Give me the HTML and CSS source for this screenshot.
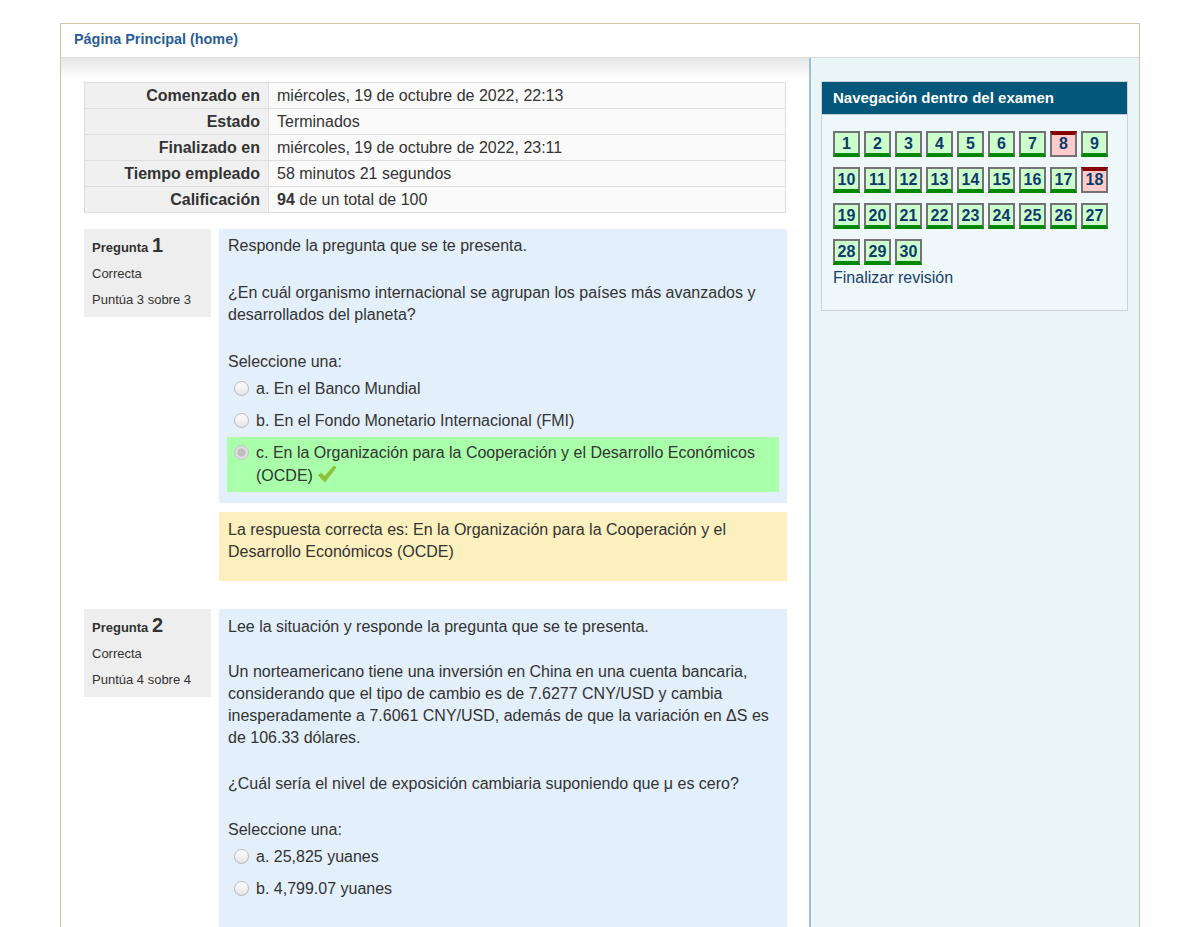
FILE: index.html
```html
<!DOCTYPE html>
<html lang="es">
<head>
<meta charset="utf-8">
<title>Revisión del examen</title>
<link rel="stylesheet" href="styles.css">
</head>
<body>
<div class="page">
  <header class="page-header">
    <a class="home-link" href="#">Página Principal (home)</a>
  </header>
  <div class="page-body">
    <main class="main">
      <table class="summary">
        <tr><th>Comenzado en</th><td>miércoles, 19 de octubre de 2022, 22:13</td></tr>
        <tr><th>Estado</th><td>Terminados</td></tr>
        <tr><th>Finalizado en</th><td>miércoles, 19 de octubre de 2022, 23:11</td></tr>
        <tr><th>Tiempo empleado</th><td>58 minutos 21 segundos</td></tr>
        <tr><th>Calificación</th><td><b>94</b> de un total de 100</td></tr>
      </table>

      <section class="que">
        <div class="info">
          <h3 class="qno">Pregunta <span class="num">1</span></h3>
          <div class="state">Correcta</div>
          <div class="grade">Puntúa 3 sobre 3</div>
        </div>
        <div class="content">
          <div class="formulation">
            <p class="gap-l">Responde la pregunta que se te presenta.</p>
            <p class="gap-l">¿En cuál organismo internacional se agrupan los países más avanzados y desarrollados del planeta?</p>
            <p class="prompt">Seleccione una:</p>
            <div class="answer">
              <div class="opt"><span class="radio"></span><span class="label">a. En el Banco Mundial</span></div>
              <div class="opt"><span class="radio"></span><span class="label">b. En el Fondo Monetario Internacional (FMI)</span></div>
              <div class="opt correct"><span class="radio checked"></span><span class="label">c. En la Organización para la Cooperación y el Desarrollo Económicos (OCDE) <svg class="tick" width="20" height="20" viewBox="0 0 20 20"><path d="M1 11.5 L4 8.5 L7.5 12 L17 1.5 L19.5 3.5 L8 18.5 Z" fill="#8fc23a"/></svg></span></div>
            </div>
          </div>
          <div class="outcome">
            <p>La respuesta correcta es: En la Organización para la Cooperación y el Desarrollo Económicos (OCDE)</p>
          </div>
        </div>
      </section>

      <section class="que">
        <div class="info">
          <h3 class="qno">Pregunta <span class="num">2</span></h3>
          <div class="state">Correcta</div>
          <div class="grade">Puntúa 4 sobre 4</div>
        </div>
        <div class="content">
          <div class="formulation formulation-long">
            <p class="gap-s">Lee la situación y responde la pregunta que se te presenta.</p>
            <p>Un norteamericano tiene una inversión en China en una cuenta bancaria, considerando que el tipo de cambio es de 7.6277 CNY/USD y cambia inesperadamente a 7.6061 CNY/USD, además de que la variación en ΔS es de 106.33 dólares.</p>
            <p>¿Cuál sería el nivel de exposición cambiaria suponiendo que μ es cero?</p>
            <p class="prompt">Seleccione una:</p>
            <div class="answer">
              <div class="opt"><span class="radio"></span><span class="label">a. 25,825 yuanes</span></div>
              <div class="opt"><span class="radio"></span><span class="label">b. 4,799.07 yuanes</span></div>
            </div>
          </div>
        </div>
      </section>
    </main>

    <aside class="side">
      <div class="nav-block">
        <div class="nav-header">Navegación dentro del examen</div>
        <div class="nav-body">
          <div class="qn-grid">
            <a class="qn ok" href="#">1</a><a class="qn ok" href="#">2</a><a class="qn ok" href="#">3</a><a class="qn ok" href="#">4</a><a class="qn ok" href="#">5</a><a class="qn ok" href="#">6</a><a class="qn ok" href="#">7</a><a class="qn bad" href="#">8</a><a class="qn ok" href="#">9</a>
            <a class="qn ok" href="#">10</a><a class="qn ok" href="#">11</a><a class="qn ok" href="#">12</a><a class="qn ok" href="#">13</a><a class="qn ok" href="#">14</a><a class="qn ok" href="#">15</a><a class="qn ok" href="#">16</a><a class="qn ok" href="#">17</a><a class="qn bad" href="#">18</a>
            <a class="qn ok" href="#">19</a><a class="qn ok" href="#">20</a><a class="qn ok" href="#">21</a><a class="qn ok" href="#">22</a><a class="qn ok" href="#">23</a><a class="qn ok" href="#">24</a><a class="qn ok" href="#">25</a><a class="qn ok" href="#">26</a><a class="qn ok" href="#">27</a>
            <a class="qn ok" href="#">28</a><a class="qn ok" href="#">29</a><a class="qn ok" href="#">30</a>
          </div>
          <a class="finish" href="#">Finalizar revisión</a>
        </div>
      </div>
    </aside>
  </div>
</div>
</body>
</html>
```
FILE: styles.css
```css
html, body {
  margin: 0;
  padding: 0;
  height: 100%;
  overflow: hidden;
  background: #fff;
}
body {
  font-family: "Liberation Sans", Arial, sans-serif;
  font-size: 16px;
  color: #333;
}
.page {
  width: 1080px;
  box-sizing: border-box;
  margin: 23px auto 0;
  border: 1px solid #ccc7ab;
  border-bottom: none;
  min-height: 1000px;
  display: flex;
  flex-direction: column;
}
.page-header {
  height: 34px;
  box-sizing: border-box;
  border-bottom: 1px solid #dcdcdc;
  display: flex;
  align-items: center;
  padding: 0 0 3px 13px;
}
.home-link {
  font-size: 14.4px;
  font-weight: bold;
  color: #2a5d98;
  text-decoration: none;
}
.page-body {
  flex: 1;
  display: flex;
}
.main {
  width: 748px;
  flex: none;
  box-sizing: border-box;
  padding: 24px 22px 0 23px;
  background: linear-gradient(#e6e6e6, #ffffff 20px);
}
.summary {
  width: 702px;
  border-collapse: collapse;
  margin-bottom: 16px;
}
.summary th, .summary td {
  border: 1px solid #dedede;
  height: 25px;
  padding: 0 8px;
  line-height: 22px;
  font-size: 16px;
}
.summary th {
  width: 167px;
  text-align: right;
  background: #f0f0f0;
  font-weight: bold;
  color: #333;
}
.summary td {
  background: #fafafa;
  text-align: left;
}
.que {
  display: flex;
  gap: 8px;
  margin-bottom: 28px;
}
.info {
  width: 127px;
  height: 88px;
  flex: none;
  box-sizing: border-box;
  background: #eee;
  padding: 8px 8px 0;
  font-size: 13px;
}
.qno {
  margin: 0;
  font-size: 13px;
  font-weight: bold;
  line-height: 22px;
  height: 22px;
}
.qno .num {
  font-size: 20px;
  line-height: 0;
}
.state {
  margin-top: 4px;
  line-height: 22px;
}
.grade {
  margin-top: 4px;
  line-height: 22px;
}
.content {
  flex: 1;
  min-width: 0;
}
.formulation {
  background: #e3effa;
  padding: 6px 8px 11px;
}
.formulation-long {
  padding-top: 7px;
  padding-bottom: 60px;
}
.formulation p {
  margin: 0 0 24px;
  padding-left: 1px;
  line-height: 22px;
}
.formulation p.gap-l {
  margin-bottom: 25px;
}
.formulation p.gap-s {
  margin-bottom: 23px;
}
.formulation p.prompt {
  margin-bottom: 0;
}
.opt {
  display: flex;
  align-items: flex-start;
  padding: 5px 8px 5px 7px;
  line-height: 22px;
}
.opt.correct {
  background: #aaffaa;
}
.radio {
  width: 15px;
  height: 15px;
  flex: none;
  box-sizing: border-box;
  border-radius: 50%;
  border: 1px solid #b9b9b9;
  background: linear-gradient(#ffffff, #e4e4e4);
  margin-top: 3px;
  margin-right: 7px;
}
.radio.checked {
  border-color: #c4c4c4;
  background: radial-gradient(circle, #bdbdbd 0 3.5px, #dedede 4.5px);
}
.label {
  flex: 1;
}
.tick {
  vertical-align: -3px;
}
.outcome {
  margin-top: 9px;
  background: #fdf0bf;
  padding: 7px 8px 18px 9px;
}
.outcome p {
  margin: 0;
  line-height: 22px;
}
.side {
  flex: 1;
  background: #eaf5f8;
  border-left: 2px solid #9dc0dc;
  padding: 23px 11px 0 10px;
}
.nav-block {
  border: 1px solid #cbd3d6;
  background: #eef7f9;
}
.nav-header {
  background: #02577a;
  color: #fff;
  font-size: 15px;
  font-weight: bold;
  height: 32px;
  line-height: 32px;
  padding-left: 11px;
  border-bottom: 1px solid #c8d0d3;
}
.nav-body {
  padding: 16px 11px 21px 11px;
}
.qn-grid {
  display: flex;
  flex-wrap: wrap;
  gap: 10px 4px;
  width: 282px;
}
.qn {
  width: 27px;
  height: 26px;
  box-sizing: border-box;
  border: 2px solid #737373;
  display: flex;
  align-items: center;
  justify-content: center;
  font-size: 16px;
  font-weight: bold;
  color: #0e3a6a;
  text-decoration: none;
  line-height: 1;
}
.qn.ok {
  background: #ccffcc;
  border-bottom: 4px solid #008800;
  padding-top: 2px;
}
.qn.bad {
  background: #ffcccc;
  border-top: 4px solid #880000;
  padding-bottom: 2px;
}
.finish {
  display: block;
  margin-top: 2px;
  line-height: 22px;
  color: #17406f;
  text-decoration: none;
}
```
